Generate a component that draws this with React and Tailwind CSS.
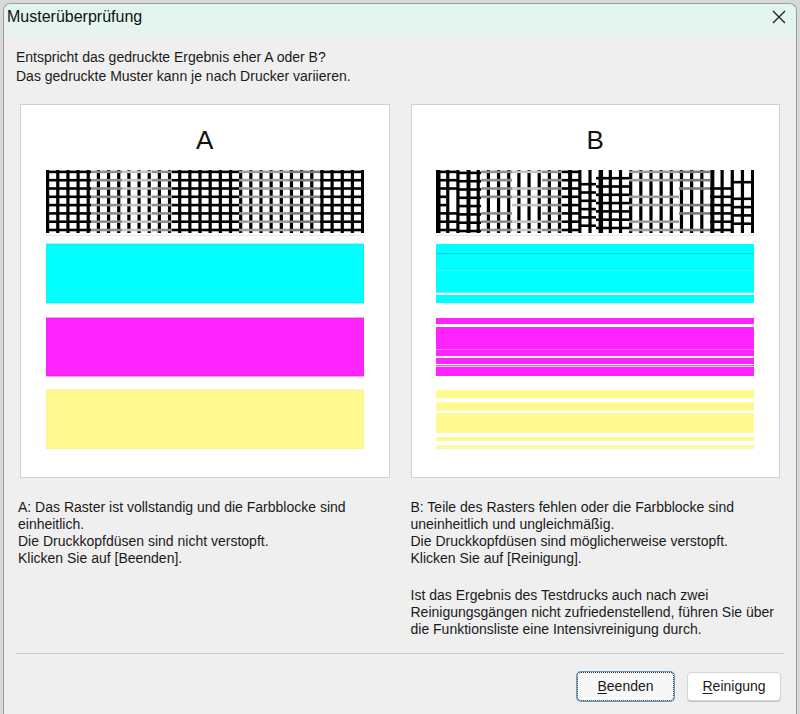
import React from "react"

const ROWS = [0, 1, 2, 3, 4, 5, 6, 7]
const BAR_COUNT = 32
const PITCH = 315 / 31

// horizontal segments of the nozzle grid: [x0, x1, colour, rows, dy]
const SEG_A = [
  [0, 45, "#000"],
  [45, 76, "#8e8e8e"],
  [76, 106, "#c2c2c2"],
  [106, 126, "#8e8e8e"],
  [126, 193, "#000"],
  [193, 243, "#9c9c9c"],
  [243, 274, "#7c7c7c"],
  [274, 318, "#000"],
]

const SEG_B = [
  [0, 10, "#000"],
  [10, 21, "#000", [0, 1, 2, 5, 6, 7]],
  [21, 45, "#000", ROWS, 1],
  [45, 76, "#8e8e8e", [0, 1, 2, 3, 5, 6, 7]],
  [76, 106, "#c4c4c4", [0, 2, 3, 4, 6, 7]],
  [106, 126, "#8e8e8e"],
  [126, 143, "#000"],
  [143, 160, "#000", [1, 2, 3, 4, 5, 6], 4],
  [160, 193, "#000", [1, 2, 3, 4, 5, 6, 7], -2],
  [193, 243, "#9c9c9c", [0, 1, 3, 4, 6, 7]],
  [243, 274, "#7c7c7c", [0, 1, 2, 4, 5, 7]],
  [274, 296, "#000", [2, 3, 4, 5, 6, 7]],
  [296, 318, "#000", [1, 3, 4, 5, 6], 2],
]

const THICK_B = { 0: 4.5, 3: 4, 13: 4, 16: 4.5, 27: 4 }

// colour bands: [y, h, fill, edge]
const BANDS_A = [
  [74, 59, "#00ffff", "#22dede"],
  [148, 58, "#ff24ff", "#e020e0"],
  [220, 59, "#fffa90", "#f4ee88"],
]

const BANDS_B = [
  [74, 48.7, "#00ffff"],
  [125, 8, "#00ffff"],
  [83, 1, "#17cccc"],
  [100, 0.8, "#4dfafa"],
  [148, 6, "#ff24ff"],
  [157, 29, "#ff24ff"],
  [179, 1, "#ff7cff"],
  [188, 6, "#ff24ff"],
  [195, 1, "#cc66cc"],
  [196.7, 9.3, "#ff24ff"],
  [220, 8.3, "#fffa90"],
  [232.3, 8.4, "#fffa90"],
  [243, 20, "#fffa90"],
  [267, 4, "#fffa90"],
  [275, 4.3, "#fff6a8"],
]

function Pattern({ segments, thick = {}, bands }) {
  return (
    <svg width="318" height="279" viewBox="0 0 318 279" className="block">
      {Array.from({ length: BAR_COUNT }).map((_, i) => {
        const w = thick[i] || 3.2
        return <rect key={"b" + i} x={i * PITCH} y={0} width={w} height={63} fill="#000" />
      })}
      {segments.map(([x0, x1, c, rows = ROWS, dy = 0], s) =>
        rows.map((r) => (
          <rect key={s + "-" + r} x={x0} y={0.6 + dy + r * 8.3} width={x1 - x0} height={2.6} fill={c} />
        )),
      )}
      <rect x={0} y={65} width={318} height={1} fill="#e6e6e6" />
      {bands.map(([y, h, fill, stroke], i) => (
        <rect
          key={"c" + i}
          x={0}
          y={y}
          width={318}
          height={h}
          fill={fill}
          stroke={stroke || "none"}
          strokeWidth={stroke ? 0.8 : 0}
        />
      ))}
    </svg>
  )
}

function Panel({ letter, children }) {
  return (
    <div className="h-[374px] bg-white border border-[#d2d2d2] flex flex-col items-center">
      <div className="mt-[22px] text-[26px] leading-[26px] text-[#111]">{letter}</div>
      <div className="mt-[17px]">{children}</div>
    </div>
  )
}

export default function App() {
  return (
    <div className="w-[800px] h-[714px] overflow-hidden bg-[#d6d8d9] pt-[3px] px-[3px] font-['Liberation_Sans',Arial,sans-serif] text-[#1a1a1a]">
      <div className="h-[711px] flex flex-col bg-[#efefef] border border-[#9c9c9c] border-b-0 rounded-t-[8px] overflow-hidden">
        {/* title bar */}
        <div className="h-[31px] flex items-start justify-between bg-gradient-to-b from-[#dff5ed] to-[#e8f4f0] pl-[3px] pr-[10px] pt-[3px]">
          <div className="text-[16px] leading-[20px] text-[#111]">Musterüberprüfung</div>
          <svg width="14" height="14" viewBox="0 0 14 14" className="mt-[3px]">
            <path d="M1 1 L13 13 M13 1 L1 13" stroke="#222" strokeWidth="1.4" fill="none" />
          </svg>
        </div>

        <div className="flex-1 flex flex-col px-[12px]">
          <div className="mt-[13px] text-[14px] leading-[19px]">
            Entspricht das gedruckte Ergebnis eher A oder B?
            <br />
            Das gedruckte Muster kann je nach Drucker variieren.
          </div>

          <div className="mt-[18px] px-[4px] grid grid-cols-2 gap-[21px]">
            <Panel letter="A">
              <Pattern segments={SEG_A} bands={BANDS_A} />
            </Panel>
            <Panel letter="B">
              <Pattern segments={SEG_B} thick={THICK_B} bands={BANDS_B} />
            </Panel>
          </div>

          <div className="mt-[21px] pl-[2px] pr-[4px] grid grid-cols-2 gap-[23px] text-[14px] leading-[17px]">
            <div>
              A: Das Raster ist vollstandig und die Farbblocke sind
              <br />
              einheitlich.
              <br />
              Die Druckkopfdüsen sind nicht verstopft.
              <br />
              Klicken Sie auf [Beenden].
            </div>
            <div>
              <div>
                B: Teile des Rasters fehlen oder die Farbblocke sind
                <br />
                uneinheitlich und ungleichmäßig.
                <br />
                Die Druckkopfdüsen sind möglicherweise verstopft.
                <br />
                Klicken Sie auf [Reinigung].
              </div>
              <div className="mt-[20px]">
                Ist das Ergebnis des Testdrucks auch nach zwei
                <br />
                Reinigungsgängen nicht zufriedenstellend, führen Sie über
                <br />
                die Funktionsliste eine Intensivreinigung durch.
              </div>
            </div>
          </div>

          <div className="mt-[15px] h-px bg-[#cacaca]" />

          <div className="mt-[18px] pr-[3px] flex justify-end gap-[13px]">
            <button className="w-[97px] h-[29px] rounded-[4px] border border-dotted border-[#12364c] bg-[#f7f7f7] text-[14px] text-[#1a1a1a] shadow-[0_0_0_1px_#6f97b2]">
              <span className="underline underline-offset-2">B</span>eenden
            </button>
            <button className="w-[94px] h-[29px] rounded-[4px] border border-[#d5d5d5] bg-white text-[14px] text-[#1a1a1a] shadow-[0_1px_0_#c4c4c4]">
              <span className="underline underline-offset-2">R</span>einigung
            </button>
          </div>
        </div>
      </div>
    </div>
  )
}
